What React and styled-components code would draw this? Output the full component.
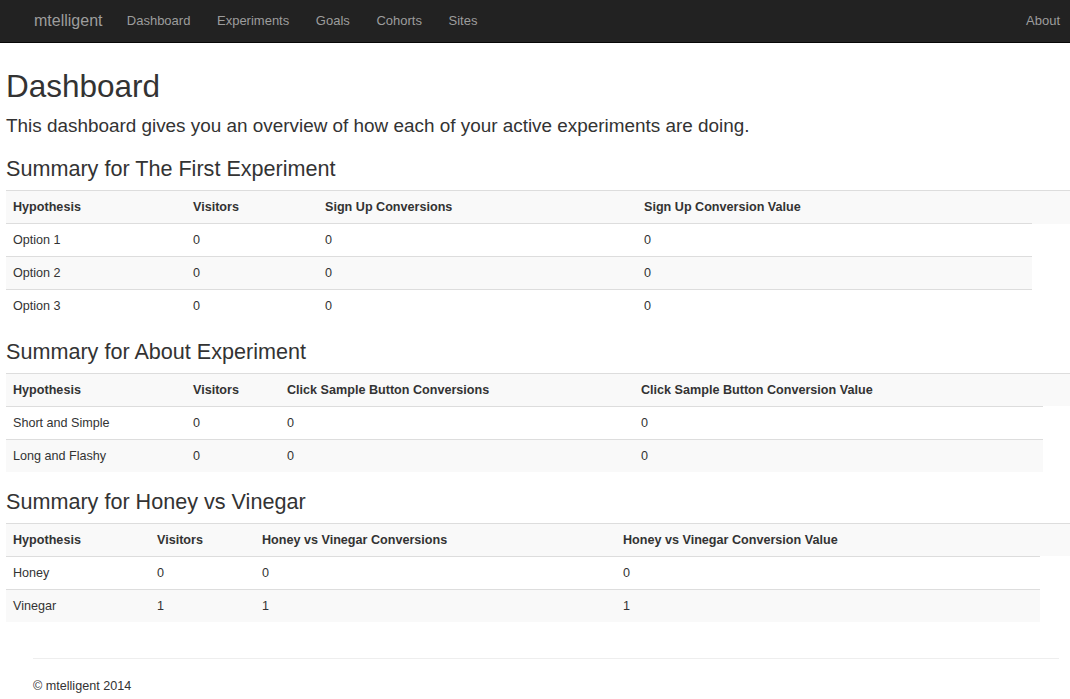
import React from 'react';
import styled, { createGlobalStyle } from 'styled-components';

const GlobalStyle = createGlobalStyle`
    html, body {
        margin: 0;
        padding: 0;
        overflow: hidden;
        background: #fff;
    }
    body {
        font-family: "Liberation Sans", Arial, Helvetica, sans-serif;
        font-size: 12.6px;
        line-height: 18px;
        color: #333;
    }
`

const navLinks = ['Dashboard', 'Experiments', 'Goals', 'Cohorts', 'Sites'];

const experiments = [
    {
        name: 'The First Experiment',
        goal: 'Sign Up',
        cols: [180, 132, 319, 395, 38],
        rows: [
            ['Option 1', 0, 0, 0],
            ['Option 2', 0, 0, 0],
            ['Option 3', 0, 0, 0],
        ],
    },
    {
        name: 'About Experiment',
        goal: 'Click Sample Button',
        cols: [180, 94, 354, 409, 27],
        rows: [
            ['Short and Simple', 0, 0, 0],
            ['Long and Flashy', 0, 0, 0],
        ],
    },
    {
        name: 'Honey vs Vinegar',
        goal: 'Honey vs Vinegar',
        cols: [144, 105, 361, 424, 30],
        rows: [
            ['Honey', 0, 0, 0],
            ['Vinegar', 1, 1, 1],
        ],
    },
];

export default function App() {
    return (
        <>
            <GlobalStyle />
            <Navbar>
                <Brand href="#">mtelligent</Brand>
                {navLinks.map((l) => (
                    <NavLink key={l} href="#">{l}</NavLink>
                ))}
                <NavLink href="#" $right>About</NavLink>
            </Navbar>

            <Main>
                <Title>Dashboard</Title>
                <Lead>This dashboard gives you an overview of how each of your active experiments are doing.</Lead>

                {experiments.map((exp) => (
                    <section key={exp.name}>
                        <Summary>Summary for {exp.name}</Summary>
                        <Table>
                            <colgroup>
                                {exp.cols.map((w, i) => (
                                    <col key={i} style={{ width: w }} />
                                ))}
                            </colgroup>
                            <tbody>
                                <Row $shade>
                                    <HeadCell>Hypothesis</HeadCell>
                                    <HeadCell>Visitors</HeadCell>
                                    <HeadCell>{exp.goal} Conversions</HeadCell>
                                    <HeadCell>{exp.goal} Conversion Value</HeadCell>
                                    <HeadCell />
                                </Row>
                                {exp.rows.map((r, i) => (
                                    <Row key={r[0]} $shade={i % 2 === 1}>
                                        {r.map((v, j) => (
                                            <Cell key={j}>{v}</Cell>
                                        ))}
                                    </Row>
                                ))}
                            </tbody>
                        </Table>
                    </section>
                ))}
            </Main>

            <Footer>
                <hr />
                <p>&copy; mtelligent 2014</p>
            </Footer>
        </>
    );
}

const Navbar = styled.nav`
    display: flex;
    align-items: center;
    height: 42px;
    background-color: #222;
    border-bottom: 1px solid #080808;
    padding-left: 20px;
`

const Brand = styled.a`
    font-size: 16px;
    color: #9d9d9d;
    text-decoration: none;
    padding: 0 11px 0 14px;
    line-height: 42px;
`

const NavLink = styled.a`
    font-size: 13px;
    color: #9d9d9d;
    text-decoration: none;
    line-height: 42px;
    padding: ${(p) => (p.$right ? '0 10px 0 13px' : '0 13.3px')};
    margin-left: ${(p) => (p.$right ? 'auto' : '0')};
`

const Main = styled.main`
    padding: 25px 0 0 6px;
`

const Title = styled.h1`
    font-size: 31.5px;
    font-weight: 500;
    line-height: 36px;
    margin: 0 0 9px;
`

const Lead = styled.p`
    font-size: 18.9px;
    font-weight: 300;
    line-height: 1.4;
    margin: 0 0 18px;
`

const Summary = styled.h3`
    font-size: 21.6px;
    font-weight: 500;
    line-height: 1.1;
    margin: 18px 0 9px;
`

const Table = styled.table`
    width: 1064px;
    table-layout: fixed;
    border-collapse: collapse;
    border-spacing: 0;
    margin-bottom: 18px;
`

const Row = styled.tr`
    td, th {
        background-color: ${(p) => (p.$shade ? '#f9f9f9' : 'transparent')};
    }
`

const Cell = styled.td`
    padding: 7px;
    line-height: 18px;
    text-align: left;
    vertical-align: top;
    border-top: 1px solid #ddd;
    white-space: nowrap;
`

const HeadCell = styled(Cell).attrs({ as: 'th' })`
    font-weight: bold;
`

const Footer = styled.footer`
    margin: 36px 11px 0 33px;

    hr {
        margin: 0 0 18px;
        border: 0;
        border-top: 1px solid #eee;
    }

    p {
        margin: 0;
        line-height: 18px;
    }
`
